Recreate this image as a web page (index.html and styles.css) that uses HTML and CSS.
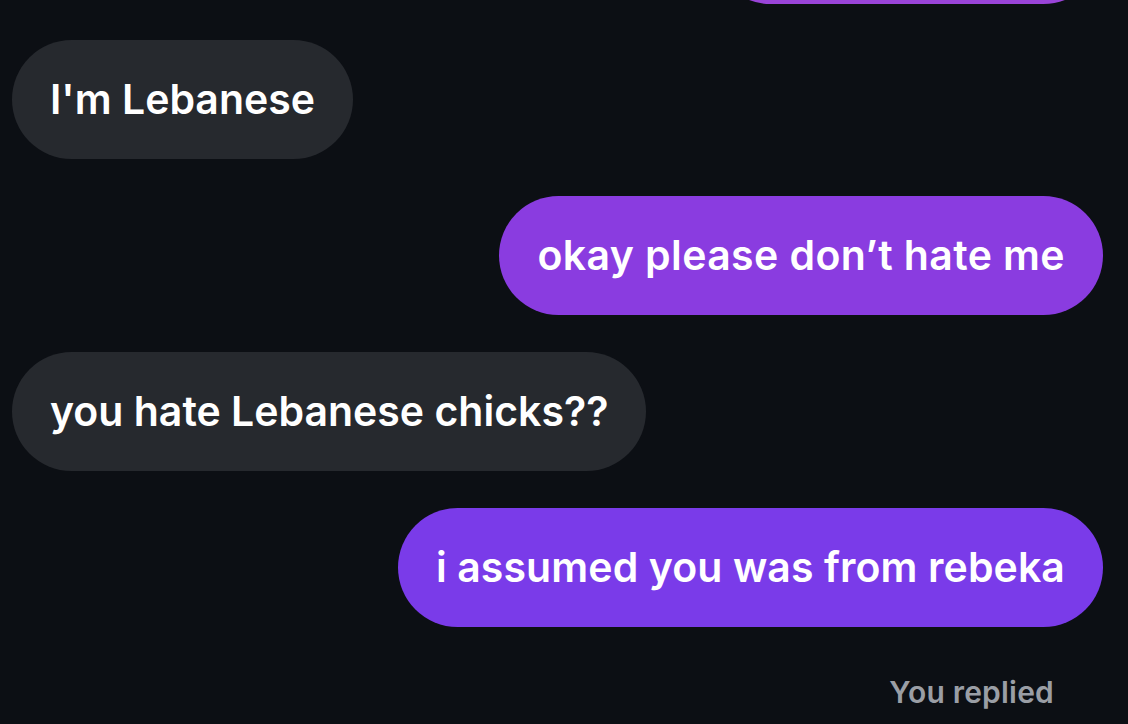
FILE: index.html
```html
<!DOCTYPE html>
<html lang="en">
<head>
<meta charset="utf-8">
<title>Chat</title>
<link rel="stylesheet" href="styles.css">
</head>
<body>
<div class="screen">
  <div class="thread">
    <div class="row out"><div class="bubble b-top"></div></div>
    <div class="row in"><div class="bubble gray">I'm Lebanese</div></div>
    <div class="row out"><div class="bubble b-mid">okay please don’t hate me</div></div>
    <div class="row in"><div class="bubble gray">you hate Lebanese chicks??</div></div>
    <div class="row out"><div class="bubble b-low">i assumed you was from rebeka</div></div>
    <div class="row out"><div class="status">You replied</div></div>
  </div>
</div>
</body>
</html>
```

FILE: styles.css
```css
html, body {
  margin: 0;
  padding: 0;
  background: #0c0f14;
}
.screen {
  width: 1128px;
  height: 724px;
  overflow: hidden;
  background: #0c0f14;
  font-family: Inter, "Noto Sans", sans-serif;
}
.thread {
  display: flex;
  flex-direction: column;
  gap: 37px;
  padding: 0 25px 0 12px;
  margin-top: -115px;
}
.row {
  display: flex;
}
.row.in { justify-content: flex-start; }
.row.out { justify-content: flex-end; }
.bubble {
  box-sizing: border-box;
  height: 119px;
  padding: 0 38px 2px;
  border-radius: 60px;
  display: flex;
  align-items: center;
  font-size: 41px;
  font-weight: 600;
  color: #ffffff;
  white-space: nowrap;
  letter-spacing: 0;
}
.gray { background: #26292e; }
.b-top { background: #9a44d8; width: 392px; margin-bottom: -1px; }
.b-mid { background: #8a3ce0; letter-spacing: 0.4px; }
.b-low { background: #7a3be9; letter-spacing: 0.1px; }
.status {
  margin-top: 10px;
  margin-right: 49px;
  font-size: 30px;
  font-weight: 600;
  letter-spacing: 0.2px;
  color: #9a9ea5;
}
```
